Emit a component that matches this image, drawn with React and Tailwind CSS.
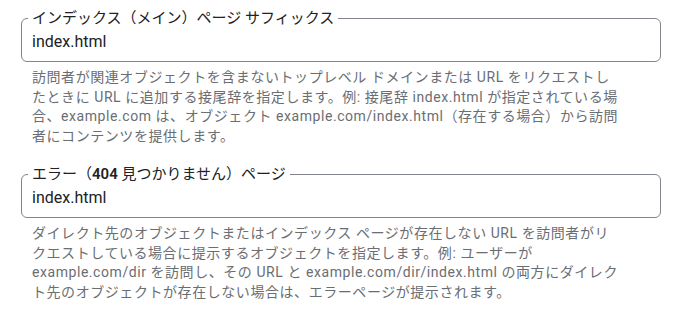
import React from 'react'

const FONT = { fontFamily: "Roboto, 'Noto Sans CJK JP', sans-serif" }

const Field = ({ label, value, help }) => (
  <div>
    <fieldset className="m-0 w-[640px] rounded-[6px] border border-[#80868b] px-[10px] pb-[7px] pt-[2px]">
      <legend className="-ml-1 px-1 text-[15px] leading-5 text-[#202124]">{label}</legend>
      <div className="text-[16px] leading-6 text-[#202124]">{value}</div>
    </fieldset>
    <p className="mt-[6px] pl-[11px] text-[14px] leading-[19.5px] tracking-[0.04em] text-[#6a6e73]">
      {help.map((line, i) => (
        <span key={i} className="block whitespace-nowrap">{line}</span>
      ))}
    </p>
  </div>
)

export default function App() {
  return (
    <div className="h-[313px] w-[681px] bg-white pl-[21px] pt-[8px]" style={FONT}>
      <Field
        label="インデックス（メイン）ページ サフィックス"
        value="index.html"
        help={[
          '訪問者が関連オブジェクトを含まないトップレベル ドメインまたは URL をリクエストし',
          'たときに URL に追加する接尾辞を指定します。例: 接尾辞 index.html が指定されている場',
          '合、example.com は、オブジェクト example.com/index.html（存在する場合）から訪問',
          '者にコンテンツを提供します。',
        ]}
      />
      <div className="mt-[18px]">
        <Field
          label={<>エラー（<span className="font-semibold">404</span> 見つかりません）ページ</>}
          value="index.html"
          help={[
            'ダイレクト先のオブジェクトまたはインデックス ページが存在しない URL を訪問者がリ',
            'クエストしている場合に提示するオブジェクトを指定します。例: ユーザーが',
            'example.com/dir を訪問し、その URL と example.com/dir/index.html の両方にダイレク',
            'ト先のオブジェクトが存在しない場合は、エラーページが提示されます。',
          ]}
        />
      </div>
    </div>
  )
}
